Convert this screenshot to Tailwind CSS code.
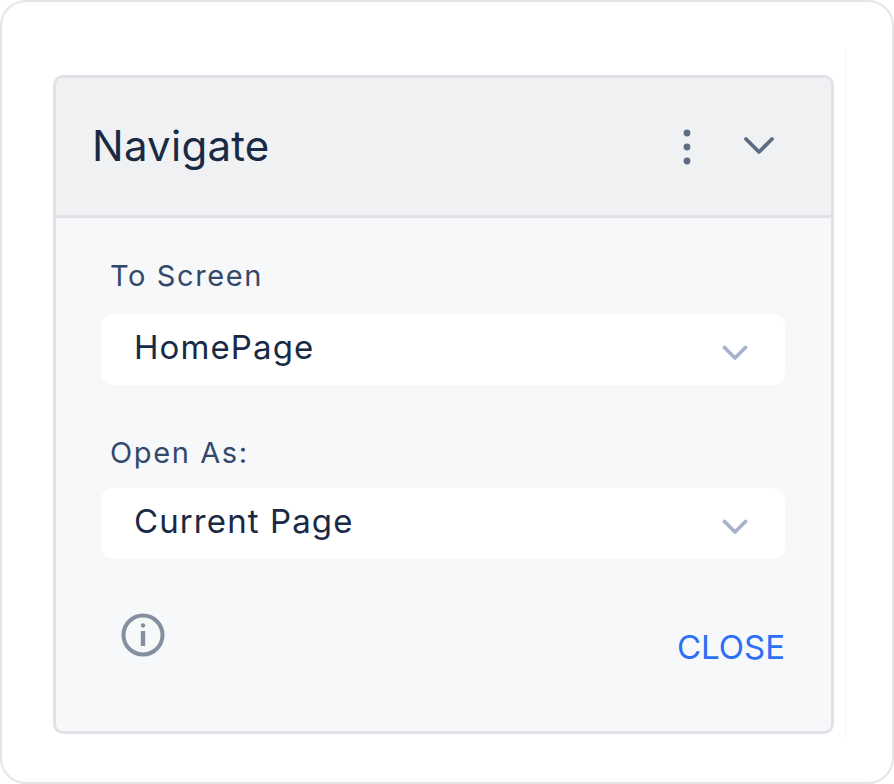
<!DOCTYPE html>
<html lang="en">
<head>
<meta charset="UTF-8">
<title>Navigate</title>
<script src="https://cdn.jsdelivr.net/npm/@tailwindcss/browser@4"></script>
</head>
<body class="bg-white font-['Inter',sans-serif]">
  <div class="w-[894px] h-[784px] border-2 border-[#e2e5ea] rounded-[26px] bg-white pt-[73px] pl-[51px] relative overflow-hidden">
    <!-- faint right line -->
    <div class="absolute left-[843px] top-[46px] h-[690px] w-px bg-[#f6f7f8]"></div>

    <div class="w-[781px] h-[659px] border-[3px] border-[#e0e2e8] rounded-[10px] bg-[#f7f8fa] overflow-hidden">
      <!-- header -->
      <div class="h-[140px] bg-[#f0f1f3] border-b-[3px] border-[#e0e2e8] flex items-center pl-[36px]">
        <h1 class="-mt-[2px] text-[42px] leading-[50px] font-[420] tracking-[0.25px] text-[#182a45]">Navigate</h1>
        <div class="ml-auto flex items-center">
          <svg class="w-[12px] h-[40px] mr-[50px]" viewBox="0 0 12 40" fill="#5c6c85">
            <circle cx="6" cy="6" r="3.4"/>
            <circle cx="6" cy="20" r="3.4"/>
            <circle cx="6" cy="34" r="3.4"/>
          </svg>
          <svg class="-mt-[2px] w-[32px] h-[20px] mr-[56px]" viewBox="0 0 32 20" fill="none" stroke="#5c6c85" stroke-width="3.8" stroke-linecap="round" stroke-linejoin="round">
            <path d="M3 3L16 16L29 3"/>
          </svg>
        </div>
      </div>

      <!-- form -->
      <div class="pl-[45px] pr-[46px]">
        <label class="block pl-[9px] pt-[41px] text-[29px] leading-[34px] font-[420] tracking-[1.6px] text-[#34496a]">To Screen</label>
        <div class="mt-[21px] h-[71px] bg-white rounded-[12px] flex items-center pl-[33px] pr-[37px]">
          <span class="-mt-[6px] text-[33px] leading-[36px] font-[420] tracking-[1.1px] text-[#182a45]">HomePage</span>
          <svg class="ml-auto mt-[7px] w-[26px] h-[16px]" viewBox="0 0 26 16" fill="none" stroke="#a9b2cc" stroke-width="3.8" stroke-linecap="round" stroke-linejoin="round">
            <path d="M2.5 2.5L13 13L23.5 2.5"/>
          </svg>
        </div>

        <label class="block pl-[9px] pt-[51px] text-[29px] leading-[34px] font-[420] tracking-[1.6px] text-[#34496a]">Open As:</label>
        <div class="mt-[18px] h-[71px] bg-white rounded-[12px] flex items-center pl-[33px] pr-[37px]">
          <span class="-mt-[6px] text-[33px] leading-[36px] font-[420] tracking-[1.1px] text-[#182a45]">Current Page</span>
          <svg class="ml-auto mt-[7px] w-[26px] h-[16px]" viewBox="0 0 26 16" fill="none" stroke="#a9b2cc" stroke-width="3.8" stroke-linecap="round" stroke-linejoin="round">
            <path d="M2.5 2.5L13 13L23.5 2.5"/>
          </svg>
        </div>

        <div class="flex items-start justify-between">
          <svg class="ml-[20px] mt-[54px] w-[44px] h-[44px]" viewBox="0 0 44 44" fill="none">
            <circle cx="22" cy="22" r="19.5" stroke="#84909f" stroke-width="4"/>
            <circle cx="22" cy="12.5" r="2.2" fill="#84909f"/>
            <path d="M22 18V33" stroke="#84909f" stroke-width="4.4"/>
          </svg>
          <button class="mt-[69px] text-[33px] leading-[38px] font-[420] text-[#2a6ff5]">CLOSE</button>
        </div>
      </div>
    </div>
  </div>
</body>
</html>
